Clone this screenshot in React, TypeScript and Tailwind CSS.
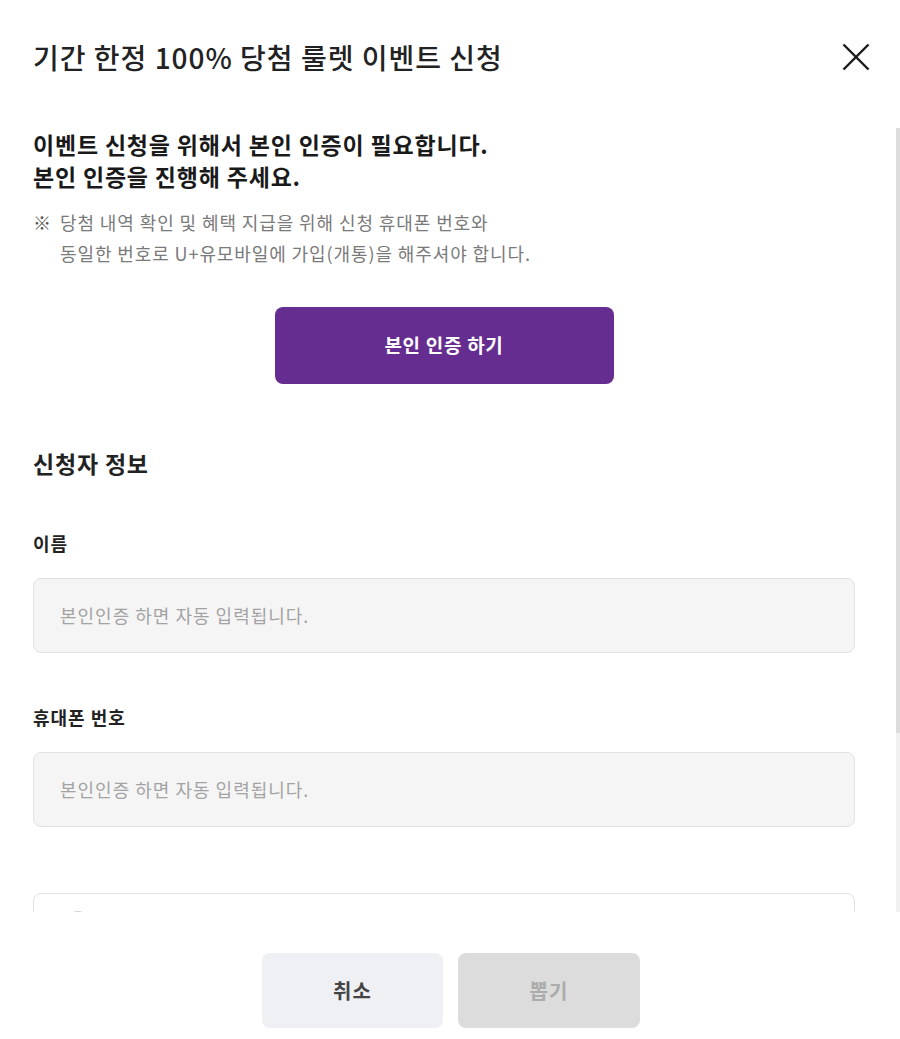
type Field = {
    label: string;
    placeholder: string;
};

const fields: Field[] = [
    { label: "이름", placeholder: "본인인증 하면 자동 입력됩니다." },
    { label: "휴대폰 번호", placeholder: "본인인증 하면 자동 입력됩니다." },
];

const agreements = [
    "[필수] 개인정보 수집 및 이용 동의",
    "[필수] 이벤트 참여 유의사항 확인",
    "[선택] 마케팅 정보 수신 동의",
];

const CheckCircle = () => (
    <span className="w-[22px] h-[22px] shrink-0 rounded-full border-2 border-[#d0d0d0] bg-white" />
);

const CloseIcon = () => (
    <svg width="28" height="28" viewBox="0 0 28 28" fill="none" stroke="#1a1a1a" strokeWidth="2.4">
        <line x1="1.5" y1="1.5" x2="26.5" y2="26.5" />
        <line x1="26.5" y1="1.5" x2="1.5" y2="26.5" />
    </svg>
);

export default function App() {
    return (
        <div className="w-[900px] h-[1039px] bg-white flex flex-col font-['Noto_Sans_CJK_KR','Noto_Sans',sans-serif] text-[#222]">
            {/* header */}
            <div className="flex items-center justify-between pl-[33px] pr-[30px] pt-[40px] pb-[54px]">
                <h1 className="text-[28px] leading-[34px] font-medium tracking-[1px]">기간 한정 100% 당첨 룰렛 이벤트 신청</h1>
                <button className="w-[28px] h-[28px] flex items-center justify-center">
                    <CloseIcon />
                </button>
            </div>

            {/* scroll body */}
            <div className="h-[784px] flex">
                <div className="flex-1 overflow-hidden pl-[33px] pr-[41px] pt-0 pb-[40px]">
                    <h2 className="text-[23px] leading-[32px] font-bold text-[#1a1a1a] tracking-[0.8px]">
                        이벤트 신청을 위해서 본인 인증이 필요합니다.
                        <br />
                        본인 인증을 진행해 주세요.
                    </h2>

                    <div className="mt-[15px] flex text-[18px] leading-[31px] text-[#7a7a7a] tracking-[0.9px]">
                        <span className="w-[27px] shrink-0 tracking-normal font-bold text-[#555]">※</span>
                        <p>
                            당첨 내역 확인 및 혜택 지급을 위해 신청 휴대폰 번호와
                            <br />
                            동일한 번호로 U+유모바일에 가입(개통)을 해주셔야 합니다.
                        </p>
                    </div>

                    <div className="mt-[38px] flex justify-center">
                        <button className="w-[339px] h-[77px] rounded-[8px] bg-[#662d91] text-white text-[19px] font-bold tracking-[0.7px]">
                            본인 인증 하기
                        </button>
                    </div>

                    <h3 className="mt-[64px] text-[23px] leading-[30px] font-bold tracking-[0.8px]">신청자 정보</h3>

                    {fields.map((field, idx) => (
                        <div key={field.label} className={idx === 0 ? "mt-[52px]" : "mt-[51px]"}>
                            <label className="block text-[18px] leading-[26px] font-bold tracking-[1px]">{field.label}</label>
                            <div className="mt-[22px] h-[75px] rounded-[8px] border border-[#e2e2e2] bg-[#f5f5f5] flex items-center px-[26px] text-[18px] tracking-[1px] text-[#a3a3a3]">
                                {field.placeholder}
                            </div>
                        </div>
                    ))}

                    <div className="mt-[66px] h-[211px] rounded-[8px] border border-[#e2e2e2] bg-white px-[33px] pt-[17px]">
                        <div className="flex items-center gap-[12px] h-[22px]">
                            <CheckCircle />
                            <span className="text-[18px] font-bold">이벤트 참여 약관 전체 동의</span>
                        </div>
                        <div className="mt-[18px] mb-[20px] h-px bg-[#eeeeee]" />
                        <div className="flex flex-col gap-[16px]">
                            {agreements.map((text) => (
                                <div key={text} className="flex items-center gap-[12px] h-[22px]">
                                    <CheckCircle />
                                    <span className="flex-1 text-[16px] text-[#555]">{text}</span>
                                    <span className="text-[15px] text-[#999] underline">보기</span>
                                </div>
                            ))}
                        </div>
                    </div>
                </div>

                {/* scrollbar */}
                <div className="w-[4px] bg-[#f1f1f1] flex flex-col">
                    <div className="h-[605px] bg-[#dcdcdc]" />
                </div>
            </div>

            {/* footer */}
            <div className="flex justify-center gap-[15px] pt-[41px] pl-[2px]">
                <button className="w-[181px] h-[75px] rounded-[8px] bg-[#eff0f4] text-[20px] font-bold tracking-[1px] text-[#444]">취소</button>
                <button className="w-[182px] h-[75px] rounded-[8px] bg-[#dcdcdc] text-[20px] font-bold tracking-[1px] text-[#ababab]" disabled>
                    뽑기
                </button>
            </div>
        </div>
    );
}
